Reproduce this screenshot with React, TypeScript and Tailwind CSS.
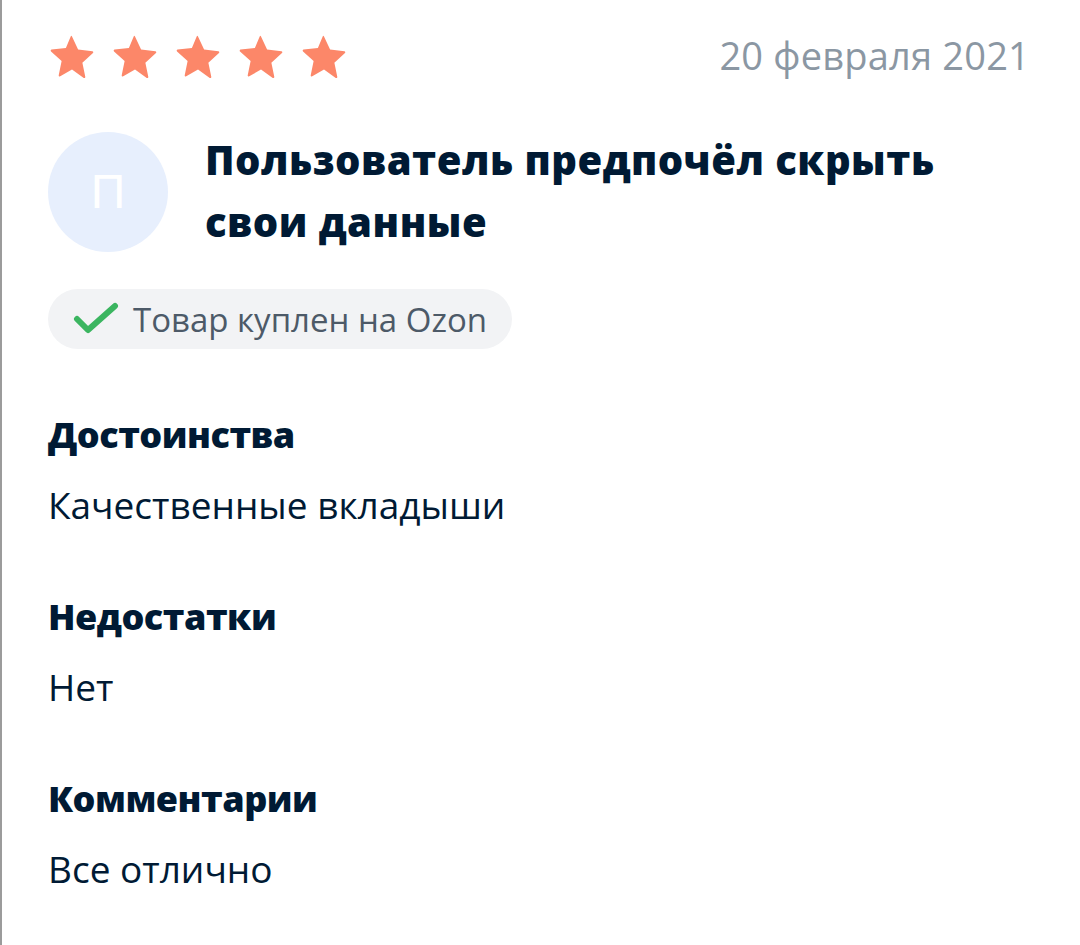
import React from "react";

function Star() {
  return (
    <svg width="48" height="46" viewBox="0 0 24 23" className="shrink-0">
      <path
        d="M12 1.2l3.05 6.55 7.15.85c.45.05.62.6.29.9l-5.3 4.85 1.45 7.05c.09.44-.38.78-.77.56L12 17.8l-5.87 3.36c-.39.22-.86-.12-.77-.56l1.45-7.05-5.3-4.85c-.33-.3-.16-.85.29-.9l7.15-.85L11.35 1.2c.2-.4.45-.4.65 0z"
        fill="#fc8769"
      />
    </svg>
  );
}

function Section({ title, text }: { title: string; text: string }) {
  return (
    <div className="flex flex-col">
      <h3 className="text-[36px] font-extrabold leading-[48px] text-[#001a34] tracking-[-0.5px]">{title}</h3>
      <p className="mt-[22px] text-[37px] leading-[48px] text-[#001a34]">{text}</p>
    </div>
  );
}

export default function App() {
  return (
    <div
      className="w-[1080px] h-[945px] bg-white border-l-2 border-[#9b9b9b] overflow-hidden"
      style={{ fontFamily: "'Open Sans', 'Noto Sans', sans-serif" }}
    >
      <div className="pl-[46px] pr-[50px] pt-[34px]">
        <div className="flex items-start justify-between">
          <div className="flex gap-[15px]">
            <Star />
            <Star />
            <Star />
            <Star />
            <Star />
          </div>
          <span className="text-[38px] leading-[46px] text-[#8b97a3] mt-[-2px] tracking-[0.2px]">20 февраля 2021</span>
        </div>

        <div className="flex items-start gap-[37px] mt-[52px]">
          <div className="w-[120px] h-[120px] rounded-full bg-[#e7effd] flex items-center justify-center shrink-0">
            <span className="text-[48px] font-light text-white leading-none" style={{ fontFamily: "'Liberation Sans', sans-serif" }}>П</span>
          </div>
          <h2 className="text-[40px] font-extrabold leading-[62px] text-[#001a34] mt-[-3px] tracking-[0.5px]">
            Пользователь предпочёл скрыть
            <br />
            свои данные
          </h2>
        </div>

        <div className="mt-[36px] inline-flex items-center h-[60px] rounded-full bg-[#f2f3f5] pl-[25px] pr-[25px] gap-[14px]">
          <svg width="46" height="34" viewBox="0 0 46 34" fill="none">
            <path d="M4 17l11 11L42 4" stroke="#3bb560" strokeWidth="6" strokeLinecap="round" strokeLinejoin="round" />
          </svg>
          <span className="text-[33px] text-[#4d5a68] leading-none">Товар куплен на Ozon</span>
        </div>

        <div className="mt-[62px] flex flex-col gap-[64px]">
          <Section title="Достоинства" text="Качественные вкладыши" />
          <Section title="Недостатки" text="Нет" />
          <Section title="Комментарии" text="Все отлично" />
        </div>
      </div>
    </div>
  );
}
